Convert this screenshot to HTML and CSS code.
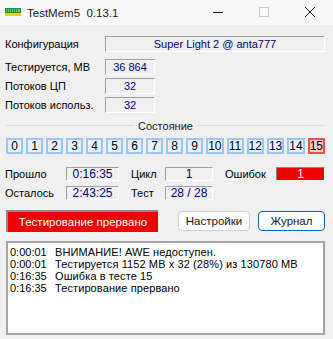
FILE: index.html
```html
<!DOCTYPE html>
<html lang="ru">
<head>
  <meta charset="UTF-8">
  <title>TestMem5 0.13.1</title>
  <link rel="stylesheet" href="styles.css">
</head>
<body>
  <div class="titlebar">
    <svg class="app-icon" width="16" height="8" viewBox="0 0 16 8">
      <rect x="0" y="0" width="16" height="8" fill="#2f8f2f"/>
      <rect x="1" y="1" width="14" height="3" fill="#6cc46c"/>
      <rect x="2" y="1" width="1" height="3" fill="#2f8f2f"/>
      <rect x="4" y="1" width="1" height="3" fill="#2f8f2f"/>
      <rect x="6" y="1" width="1" height="3" fill="#2f8f2f"/>
      <rect x="8" y="1" width="1" height="3" fill="#2f8f2f"/>
      <rect x="10" y="1" width="1" height="3" fill="#2f8f2f"/>
      <rect x="12" y="1" width="1" height="3" fill="#2f8f2f"/>
      <rect x="0" y="5" width="16" height="3" fill="#e8d21a"/>
    </svg>
    <span class="title">TestMem5&nbsp;&nbsp;0.13.1</span>
    <div class="controls">
      <svg class="ctl" width="46" height="25" viewBox="0 0 46 25"><path d="M18 12.5h10" stroke="#1a1a1a" stroke-width="1"/></svg>
      <svg class="ctl" width="46" height="25" viewBox="0 0 46 25"><rect x="18.5" y="7.5" width="9" height="9" fill="none" stroke="#c4c4c4" stroke-width="1"/></svg>
      <svg class="ctl" width="46" height="25" viewBox="0 0 46 25"><path d="M18 7l10 10M28 7l-10 10" stroke="#1a1a1a" stroke-width="1"/></svg>
    </div>
  </div>

  <div class="main">
    <div class="row row-cfg">
      <span class="label">Конфигурация</span>
      <span class="field wide">Super Light 2 @ anta777</span>
    </div>
    <div class="row">
      <span class="label">Тестируется, MB</span>
      <span class="field short">36 864</span>
    </div>
    <div class="row">
      <span class="label">Потоков ЦП</span>
      <span class="field short">32</span>
    </div>
    <div class="row">
      <span class="label">Потоков использ.</span>
      <span class="field short">32</span>
    </div>

    <div class="section"><span>Состояние</span></div>

    <div class="cells">
      <span class="cell">0</span>
      <span class="cell">1</span>
      <span class="cell">2</span>
      <span class="cell">3</span>
      <span class="cell">4</span>
      <span class="cell">5</span>
      <span class="cell">6</span>
      <span class="cell">7</span>
      <span class="cell">8</span>
      <span class="cell">9</span>
      <span class="cell">10</span>
      <span class="cell">11</span>
      <span class="cell">12</span>
      <span class="cell">13</span>
      <span class="cell">14</span>
      <span class="cell cell-err">15</span>
    </div>

    <div class="times">
      <div class="trow">
        <span class="tl tl-1">Прошло</span>
        <span class="field tf-1">0:16:35</span>
        <span class="tl tl-2">Цикл</span>
        <span class="field tf-2">1</span>
        <span class="tl tl-3">Ошибок</span>
        <span class="field tf-3 red">1</span>
      </div>
      <div class="trow">
        <span class="tl tl-1">Осталось</span>
        <span class="field tf-1">2:43:25</span>
        <span class="tl tl-2">Тест</span>
        <span class="field tf-2">28 / 28</span>
      </div>
    </div>

    <div class="actions">
      <span class="status red">Тестирование прервано</span>
      <button class="btn btn-settings">Настройки</button>
      <button class="btn btn-log">Журнал</button>
    </div>

    <div class="log">
      <div class="line"><span class="ts">0:00:01</span><span class="msg">ВНИМАНИЕ! AWE недоступен.</span></div>
      <div class="line"><span class="ts">0:00:01</span><span class="msg">Тестируется 1152 MB x 32 (28%) из 130780 MB</span></div>
      <div class="line"><span class="ts">0:16:35</span><span class="msg">Ошибка в тесте 15</span></div>
      <div class="line"><span class="ts">0:16:35</span><span class="msg">Тестирование прервано</span></div>
    </div>
  </div>
</body>
</html>
```

FILE: styles.css
```css
/* TestMem5 window */
body {
  margin: 0;
  width: 333px;
  height: 339px;
  background-color: #f0f0f0;
  font-family: "Liberation Sans", Arial, sans-serif;
  font-size: 11px;
  color: #000;
  overflow: hidden;
}

.titlebar {
  display: flex;
  align-items: center;
  height: 25px;
  background-color: #f8f8f8;
}

.app-icon {
  margin-left: 5px;
  margin-top: -2px;
}

.title {
  margin-left: 6px;
  font-size: 11.5px;
  color: #1a1a1a;
}

.controls {
  display: flex;
  margin-left: auto;
}

.ctl {
  display: block;
}

.main {
  padding: 11px 8px 0 5px;
}

.row {
  display: flex;
  align-items: center;
  height: 16px;
  margin-bottom: 3px;
}

.row-cfg {
  margin-bottom: 7px;
}

.label {
  width: 100px;
}

.field {
  box-sizing: border-box;
  display: block;
  height: 16px;
  line-height: 14px;
  text-align: center;
  color: #000080;
  border-top: 1px solid #a0a0a0;
  border-left: 1px solid #a0a0a0;
  border-bottom: 1px solid #fff;
  border-right: 1px solid #fff;
}

.wide {
  flex: 1;
}

.short {
  width: 50px;
}

.section {
  display: flex;
  align-items: center;
  gap: 4px;
  margin: 6px 0 0 1px;
  height: 13px;
  color: #1a1a1a;
}

.section::before,
.section::after {
  content: "";
  flex: 1;
  height: 1px;
  background-color: #dcdcdc;
}

.cells {
  display: grid;
  grid-template-columns: repeat(16, 1fr);
  gap: 3px;
  margin: 6px 0 0 1px;
  font-size: 12px;
}

.cell {
  box-sizing: border-box;
  height: 16px;
  line-height: 12px;
  text-align: center;
  border: 2px solid #99c6ff;
  background-color: #eaf2ff;
}

.cell-err {
  border-color: #f05050;
  background-color: #ffc8c8;
}

.times {
  margin-top: 13px;
}

.trow {
  display: flex;
  align-items: center;
  height: 14px;
  margin-bottom: 5px;
}

.trow .field {
  height: 14px;
  line-height: 12px;
  font-size: 12px;
}

.tl-1 { width: 61px; }
.tl-2 { width: 34px; margin-left: 12px; }
.tl-3 { width: 51px; margin-left: 12px; }
.tf-1 { width: 53px; }
.tf-2 { width: 48px; }
.tf-3 { width: 49px; }

.red {
  background-color: #f20000;
  color: #fff;
  border-top: 1px solid #8a8a8a;
  border-left: 1px solid #8a8a8a;
}

.actions {
  display: flex;
  align-items: center;
  margin: 10px 0 0 1px;
}

.status {
  box-sizing: border-box;
  width: 152px;
  height: 22px;
  line-height: 20px;
  text-align: center;
  font-size: 11.5px;
  border-top-width: 2px;
  border-left-width: 2px;
}

.btn {
  box-sizing: border-box;
  height: 20px;
  padding: 0;
  font-family: "Liberation Sans", Arial, sans-serif;
  font-size: 11.5px;
  color: #1a1a1a;
  background-color: #fdfdfd;
  border: 1px solid #d0d0d0;
  border-radius: 4px;
}

.btn-settings {
  width: 72px;
  margin-left: 20px;
}

.btn-log {
  width: 67px;
  margin-left: 8px;
  border-color: #0067c0;
}

.log {
  box-sizing: border-box;
  height: 94px;
  margin: 9px 0 0 1px;
  padding: 3px 2px;
  background-color: #fff;
  border: 2px solid #a5a5a5;
  font-size: 11px;
}

.line {
  display: flex;
  height: 12px;
  line-height: 12px;
  white-space: nowrap;
}

.ts {
  width: 45px;
  flex-shrink: 0;
}

.msg {
  letter-spacing: 0.1px;
}
```
